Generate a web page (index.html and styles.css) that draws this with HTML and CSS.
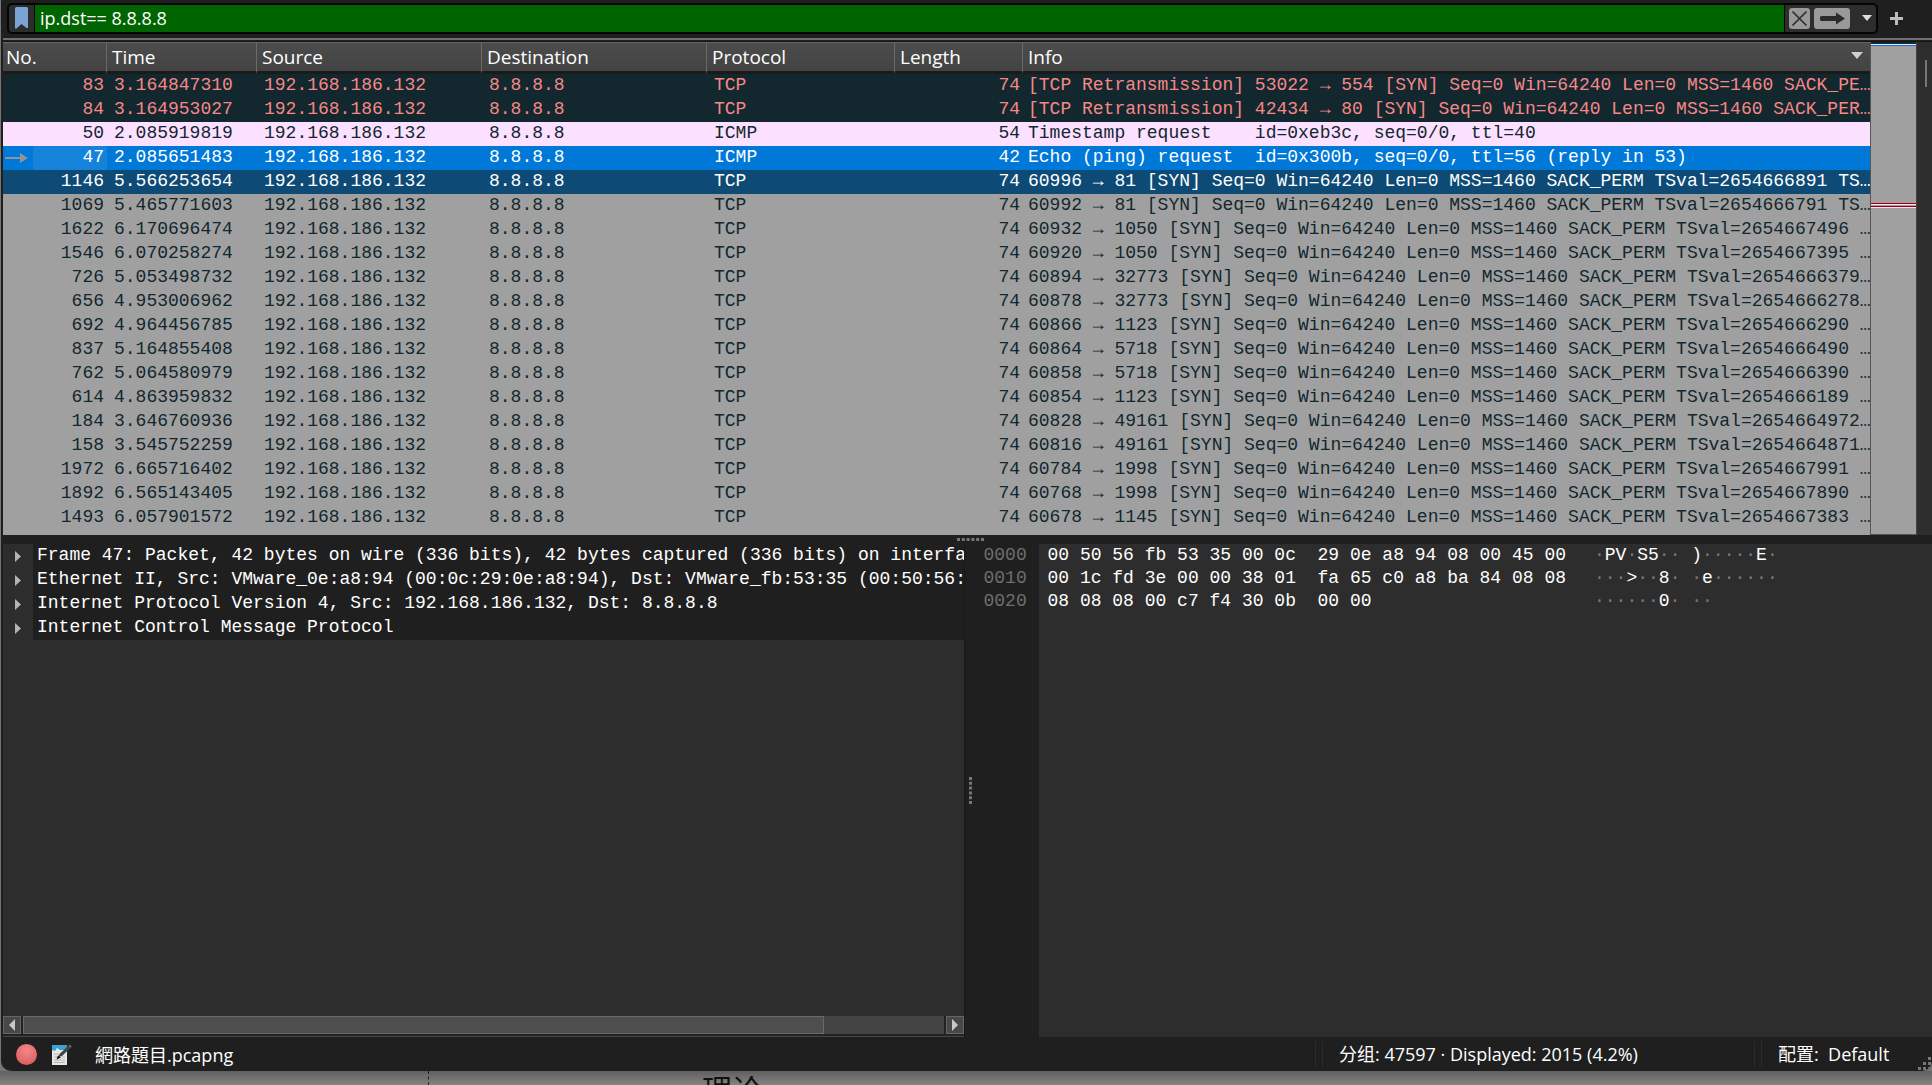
FILE: index.html
```
<!DOCTYPE html>
<html lang="zh">
<head>
    <meta charset="UTF-8">
    <meta name="viewport" content="width=device-width, initial-scale=1.0">
    <title>網路題目.pcapng</title>
    <link rel="stylesheet" href="styles.css">
</head>
<body>

<div class="window">

    <!-- Display filter -->
    <form class="filter-bar">
        <div class="filter-box">
            <button class="bookmark-button" type="button" aria-label="Bookmarks">
                <svg width="13" height="22" viewBox="0 0 13 22"><path d="M0 1.500Q0 0 1.500 0h10Q13 0 13 1.500V21h-1.500L6.500 17l-5 4.500H0z" fill="#7aa3d6"/></svg>
            </button>
            <input class="filter-input" type="text" name="filter" value="ip.dst== 8.8.8.8" aria-label="Display filter" spellcheck="false">
            <button class="tool-button clear-button" type="button" aria-label="Clear">
                <svg width="21" height="21" viewBox="0 0 21 21"><path d="M3.500 3.500l14 14M17.500 3.500l-14 14" stroke="#2b2b2b" stroke-width="1.600"/></svg>
            </button>
            <button class="tool-button apply-button" type="submit" aria-label="Apply">
                <svg width="36" height="21" viewBox="0 0 36 21"><path d="M7.500 8h14.500V4.500L31 10.500 22 16.500V13H7.500Q6 13 6 11.500v-2Q6 8 7.500 8z" fill="#2b2b2b"/></svg>
            </button>
            <button class="drop-button" type="button" aria-label="Recent filters">
                <svg width="10" height="6" viewBox="0 0 10 6"><path d="M0 0h10L5 6z" fill="#deded6"/></svg>
            </button>
        </div>
        <button class="add-button" type="button" aria-label="Add filter">
            <svg width="13" height="13" viewBox="0 0 13 13"><path d="M5 0h3v5h5v3H8v5H5V8H0V5h5z" fill="#bdbdbd"/></svg>
        </button>
    </form>

    <!-- Packet list -->
    <div class="packet-pane">
        <div class="packet-list">
            <table class="packets">
                <colgroup>
                    <col class="col-no">
                    <col class="col-time">
                    <col class="col-addr">
                    <col class="col-addr">
                    <col class="col-protocol">
                    <col class="col-length">
                    <col>
                </colgroup>
                <thead>
                    <tr>
                        <th>No.</th><th>Time</th><th>Source</th><th>Destination</th><th>Protocol</th><th>Length</th>
                        <th><div class="sorted">Info <svg width="12" height="7" viewBox="0 0 12 7"><path d="M0 0h12L6 7z" fill="#d0d0d0"/></svg></div></th>
                    </tr>
                </thead>
                <tbody>
                    <tr class="bad"><td>83</td><td>3.164847310</td><td>192.168.186.132</td><td>8.8.8.8</td><td>TCP</td><td>74</td><td>[TCP Retransmission] 53022 → 554 [SYN] Seq=0 Win=64240 Len=0 MSS=1460 SACK_PE…</td></tr>
                    <tr class="bad"><td>84</td><td>3.164953027</td><td>192.168.186.132</td><td>8.8.8.8</td><td>TCP</td><td>74</td><td>[TCP Retransmission] 42434 → 80 [SYN] Seq=0 Win=64240 Len=0 MSS=1460 SACK_PER…</td></tr>
                    <tr class="icmp"><td>50</td><td>2.085919819</td><td>192.168.186.132</td><td>8.8.8.8</td><td>ICMP</td><td>54</td><td>Timestamp request    id=0xeb3c, seq=0/0, ttl=40</td></tr>
                    <tr class="selected"><td><div class="current"><svg width="24" height="10" viewBox="0 0 24 10"><path d="M0 4h15V0l8 5-8 5V6H0z" fill="#8f9499"/></svg><span>47</span></div></td><td>2.085651483</td><td>192.168.186.132</td><td>8.8.8.8</td><td>ICMP</td><td>42</td><td>Echo (ping) request  id=0x300b, seq=0/0, ttl=56 (reply in 53)</td></tr>
                    <tr class="hovered"><td>1146</td><td>5.566253654</td><td>192.168.186.132</td><td>8.8.8.8</td><td>TCP</td><td>74</td><td>60996 → 81 [SYN] Seq=0 Win=64240 Len=0 MSS=1460 SACK_PERM TSval=2654666891 TS…</td></tr>
                    <tr><td>1069</td><td>5.465771603</td><td>192.168.186.132</td><td>8.8.8.8</td><td>TCP</td><td>74</td><td>60992 → 81 [SYN] Seq=0 Win=64240 Len=0 MSS=1460 SACK_PERM TSval=2654666791 TS…</td></tr>
                    <tr><td>1622</td><td>6.170696474</td><td>192.168.186.132</td><td>8.8.8.8</td><td>TCP</td><td>74</td><td>60932 → 1050 [SYN] Seq=0 Win=64240 Len=0 MSS=1460 SACK_PERM TSval=2654667496 …</td></tr>
                    <tr><td>1546</td><td>6.070258274</td><td>192.168.186.132</td><td>8.8.8.8</td><td>TCP</td><td>74</td><td>60920 → 1050 [SYN] Seq=0 Win=64240 Len=0 MSS=1460 SACK_PERM TSval=2654667395 …</td></tr>
                    <tr><td>726</td><td>5.053498732</td><td>192.168.186.132</td><td>8.8.8.8</td><td>TCP</td><td>74</td><td>60894 → 32773 [SYN] Seq=0 Win=64240 Len=0 MSS=1460 SACK_PERM TSval=2654666379…</td></tr>
                    <tr><td>656</td><td>4.953006962</td><td>192.168.186.132</td><td>8.8.8.8</td><td>TCP</td><td>74</td><td>60878 → 32773 [SYN] Seq=0 Win=64240 Len=0 MSS=1460 SACK_PERM TSval=2654666278…</td></tr>
                    <tr><td>692</td><td>4.964456785</td><td>192.168.186.132</td><td>8.8.8.8</td><td>TCP</td><td>74</td><td>60866 → 1123 [SYN] Seq=0 Win=64240 Len=0 MSS=1460 SACK_PERM TSval=2654666290 …</td></tr>
                    <tr><td>837</td><td>5.164855408</td><td>192.168.186.132</td><td>8.8.8.8</td><td>TCP</td><td>74</td><td>60864 → 5718 [SYN] Seq=0 Win=64240 Len=0 MSS=1460 SACK_PERM TSval=2654666490 …</td></tr>
                    <tr><td>762</td><td>5.064580979</td><td>192.168.186.132</td><td>8.8.8.8</td><td>TCP</td><td>74</td><td>60858 → 5718 [SYN] Seq=0 Win=64240 Len=0 MSS=1460 SACK_PERM TSval=2654666390 …</td></tr>
                    <tr><td>614</td><td>4.863959832</td><td>192.168.186.132</td><td>8.8.8.8</td><td>TCP</td><td>74</td><td>60854 → 1123 [SYN] Seq=0 Win=64240 Len=0 MSS=1460 SACK_PERM TSval=2654666189 …</td></tr>
                    <tr><td>184</td><td>3.646760936</td><td>192.168.186.132</td><td>8.8.8.8</td><td>TCP</td><td>74</td><td>60828 → 49161 [SYN] Seq=0 Win=64240 Len=0 MSS=1460 SACK_PERM TSval=2654664972…</td></tr>
                    <tr><td>158</td><td>3.545752259</td><td>192.168.186.132</td><td>8.8.8.8</td><td>TCP</td><td>74</td><td>60816 → 49161 [SYN] Seq=0 Win=64240 Len=0 MSS=1460 SACK_PERM TSval=2654664871…</td></tr>
                    <tr><td>1972</td><td>6.665716402</td><td>192.168.186.132</td><td>8.8.8.8</td><td>TCP</td><td>74</td><td>60784 → 1998 [SYN] Seq=0 Win=64240 Len=0 MSS=1460 SACK_PERM TSval=2654667991 …</td></tr>
                    <tr><td>1892</td><td>6.565143405</td><td>192.168.186.132</td><td>8.8.8.8</td><td>TCP</td><td>74</td><td>60768 → 1998 [SYN] Seq=0 Win=64240 Len=0 MSS=1460 SACK_PERM TSval=2654667890 …</td></tr>
                    <tr><td>1493</td><td>6.057901572</td><td>192.168.186.132</td><td>8.8.8.8</td><td>TCP</td><td>74</td><td>60678 → 1145 [SYN] Seq=0 Win=64240 Len=0 MSS=1460 SACK_PERM TSval=2654667383 …</td></tr>
                </tbody>
            </table>
        </div>
        <div class="minimap"></div>
        <div class="list-scroll"><div class="list-thumb"></div></div>
    </div>

    <div class="splitter splitter-row"><svg width="27" height="3" viewBox="0 0 27 3"><path d="M0 1.500h27" stroke="#777" stroke-width="3" stroke-dasharray="3 1.800"/></svg></div>

    <div class="lower">

        <!-- Packet details -->
        <div class="details">
            <ul class="tree">
                <li><button type="button" aria-label="Expand"><svg width="6" height="11" viewBox="0 0 6 11"><path d="M0 0l6 5.500L0 11z" fill="#b4b4b4"/></svg></button><span>Frame 47: Packet, 42 bytes on wire (336 bits), 42 bytes captured (336 bits) on interfac</span></li>
                <li><button type="button" aria-label="Expand"><svg width="6" height="11" viewBox="0 0 6 11"><path d="M0 0l6 5.500L0 11z" fill="#b4b4b4"/></svg></button><span>Ethernet II, Src: VMware_0e:a8:94 (00:0c:29:0e:a8:94), Dst: VMware_fb:53:35 (00:50:56:f</span></li>
                <li><button type="button" aria-label="Expand"><svg width="6" height="11" viewBox="0 0 6 11"><path d="M0 0l6 5.500L0 11z" fill="#b4b4b4"/></svg></button><span>Internet Protocol Version 4, Src: 192.168.186.132, Dst: 8.8.8.8</span></li>
                <li><button type="button" aria-label="Expand"><svg width="6" height="11" viewBox="0 0 6 11"><path d="M0 0l6 5.500L0 11z" fill="#b4b4b4"/></svg></button><span>Internet Control Message Protocol</span></li>
            </ul>
            <div class="h-scroll">
                <button type="button" aria-label="Scroll left"><svg width="6" height="12" viewBox="0 0 6 12"><path d="M6 0v12L0 6z" fill="#c8c8c8"/></svg></button>
                <div class="h-track"><div class="h-thumb"></div></div>
                <button type="button" aria-label="Scroll right"><svg width="6" height="12" viewBox="0 0 6 12"><path d="M0 0v12l6-6z" fill="#c8c8c8"/></svg></button>
            </div>
        </div>

        <div class="splitter splitter-col"><svg width="3" height="27" viewBox="0 0 3 27"><path d="M1.500 0v27" stroke="#777" stroke-width="3" stroke-dasharray="3 1.800"/></svg></div>

        <!-- Packet bytes -->
        <div class="bytes">
            <pre class="offsets">0000
0010
0020</pre>
            <div class="dump">
                <pre class="hex">00 50 56 fb 53 35 00 0c  29 0e a8 94 08 00 45 00
00 1c fd 3e 00 00 38 01  fa 65 c0 a8 ba 84 08 08
08 08 08 00 c7 f4 30 0b  00 00</pre>
                <pre class="ascii"><i>·</i>PV<i>·</i>S5<i>··</i> )<i>·····</i>E<i>·</i>
<i>···</i>&gt;<i>··</i>8<i>·</i> <i>·</i>e<i>······</i>
<i>······</i>0<i>·</i> <i>··</i></pre>
            </div>
        </div>
    </div>

    <!-- Status bar -->
    <div class="status-bar">
        <button class="expert-button" type="button" aria-label="Expert information"></button>
        <button class="comment-button" type="button" aria-label="Capture comments">
            <svg width="21" height="21" viewBox="0 0 21 21">
                <path d="M1 1h15v20H1z" fill="#e9e9e4"/>
                <path d="M1 1h15v5H9L6 4 4 7 1 6z" fill="#3aa0d8"/>
                <path d="M3 10h5M3 13h4M11 13h3M3 16h11M3 18.500h11" stroke="#b5b5b0"/>
                <path d="M7 13l2-3.500 8-7.500 2.500 2-8.500 8z" fill="#3f4545"/>
                <path d="M17 2l1.500-1.500 2.500 2L19.500 4z" fill="#5c6262"/>
                <path d="M5.500 15.500L7 11.500l3 2z" fill="#111"/>
            </svg>
        </button>
        <span class="status-file">網路題目.pcapng</span>
        <span class="status-cell status-packets">分组: 47597 · Displayed: 2015 (4.2%)</span>
        <span class="status-cell status-profile">配置: &nbsp;Default</span>
        <svg class="grip" width="13" height="13" viewBox="0 0 13 13"><path d="M10 0h3v3h-3zM5 5h3v3H5zM10 5h3v3h-3zM0 10h3v3H0zM5 10h3v3H5zM10 10h3v3h-3z" fill="#777"/></svg>
    </div>
</div>

<!-- Document behind the window -->
<div class="backdrop"><span class="ruler"></span><span class="backdrop-text">理论</span></div>

</body>
</html>
```
FILE: styles.css
```
* {
    box-sizing: border-box;
}
body {
    margin: 0;
    height: 100vh;
    display: flex;
    flex-direction: column;
    overflow: hidden;
    background: #777572;
    color: #fff;
    font-family: "Open Sans", "Noto Sans CJK SC", sans-serif;
    font-size: 18px;
}
button {
    display: flex;
    align-items: center;
    justify-content: center;
    padding: 0;
    border: 0;
    background: none;
}
svg {
    display: block;
    flex: none;
}
pre {
    margin: 0;
}
.packets tbody, .tree, pre {
    font-family: "Liberation Mono", monospace;
    font-size: 18px;
}
.window {
    flex: 1;
    min-height: 0;
    display: flex;
    flex-direction: column;
    margin-left: 1px;
    padding-left: 2px;
    background: #1f1f1f;
    border-radius: 0 0 10px 10px;
    overflow: hidden;
}

/* Filter bar */
.filter-bar {
    display: flex;
    align-items: center;
    height: 42px;
    padding: 0 29px 5px 4px;
    border-bottom: 1px solid #141414;
    background: linear-gradient(#6f6f6f, #6f6f6f) 0 38px / 100% 2px no-repeat;
    gap: 12px;
}
.filter-box {
    flex: 1;
    display: flex;
    align-items: center;
    height: 31px;
    border: 2px solid #050505;
    border-radius: 5px;
    background: #2d2d2d;
}
.bookmark-button {
    width: 25px;
}
.filter-input {
    flex: 1;
    min-width: 0;
    height: 27px;
    padding: 0 5px;
    border: solid #050505;
    border-width: 0 1px;
    outline: none;
    background: #006400;
    color: #fff;
    font: inherit;
}
.tool-button {
    height: 21px;
    margin-left: 4px;
    border-radius: 3px;
    background: #999;
}
.drop-button {
    width: 26px;
    padding-left: 8px;
}

/* Packet list */
.packet-pane {
    flex: 1 1 0;
    min-height: 0;
    display: flex;
}
.packet-list {
    flex: 1;
    min-width: 0;
    overflow: hidden;
    background: #a0a0a0;
    border-right: 1px solid #555;
}
.packets {
    width: 100%;
    table-layout: fixed;
    border-collapse: separate;
    border-spacing: 0;
}
.col-no {
    width: 104px;
}
.col-time {
    width: 150px;
}
.col-addr {
    width: 225px;
}
.col-protocol {
    width: 188px;
}
.col-length {
    width: 128px;
}
.packets th {
    height: 32px;
    padding: 0 7px 0 5px;
    border-top: 1px solid #666;
    border-right: 1px solid #6a6a6a;
    border-bottom: 3px solid #1a1a1a;
    background: linear-gradient(#4c4c4c, #434343);
    font-size: 19px;
    font-weight: 400;
    line-height: 28px;
    text-align: left;
}
.packets th:first-child {
    padding-left: 3px;
}
.packets th:last-child {
    border-right: 0;
}
.sorted {
    display: flex;
    justify-content: space-between;
}
.sorted svg {
    margin-top: 9px;
}
.packets td {
    height: 24px;
    padding: 0 3px 2px 7px;
    line-height: 22px;
    white-space: pre;
    overflow: hidden;
    color: #12272e;
}
.packets td:first-child, .packets td:nth-child(6) {
    text-align: right;
}
.packets td:last-child {
    padding-left: 5px;
    padding-right: 0;
}
.packets .bad td {
    background: #12272e;
    color: #f78787;
}
.packets .icmp td {
    background: #fce0ff;
}
.packets .selected td {
    background: #0078d7;
    color: #fff;
}
.packets .hovered td {
    background: #0e4a76;
    color: #fff;
}
.packets .selected td:first-child {
    padding: 0 0 0 2px;
}
.current {
    display: flex;
    align-items: center;
    gap: 4px;
}
.current span {
    flex: 1;
    padding: 0 3px 2px 0;
    border-radius: 3px;
    background: #1683da;
}
.minimap {
    width: 45px;
    border-bottom: 1px solid #555;
    background: linear-gradient(#12272e 2px, #fce0ff 2px 3px, #0078d7 3px 4px, #a0a0a0 4px 161px, #a40000 161px 162px, #fce0ff 162px 163px, #a0a0a0 163px 164px, #a40000 164px 165px, #fce0ff 165px 166px, #a0a0a0 166px);
}
.list-scroll {
    width: 16px;
    padding: 18px 5px 0 8px;
    border-left: 1px solid #444;
    background: #2d2d2d;
}
.list-thumb {
    width: 2px;
    height: 27px;
    background: #777;
}
.splitter {
    display: flex;
    align-items: center;
    justify-content: center;
}
.splitter-row {
    height: 9px;
    padding-left: 6px;
}
.splitter-col {
    width: 12px;
}

/* Details and bytes */
.lower {
    flex: 1 1 0;
    min-height: 0;
    display: flex;
}
.details {
    flex: 1 1 6px;
    min-width: 0;
    display: flex;
    flex-direction: column;
    background: #2d2d2d;
    border-right: 1px solid #181818;
}
.tree {
    flex: 1;
    margin: 0;
    padding: 0;
    list-style: none;
}
.tree li {
    display: flex;
    height: 24px;
    line-height: 22px;
}
.tree button {
    flex: none;
    width: 30px;
}
.tree span {
    flex: 1;
    min-width: 0;
    padding-left: 4px;
    overflow: hidden;
    white-space: nowrap;
    background: #1f1f1f;
}
.h-scroll {
    display: flex;
    gap: 2px;
    height: 21px;
    padding-bottom: 2px;
    border-bottom: 1px solid #484848;
    background: #222;
}
.h-scroll button {
    width: 18px;
    border: 1px solid #666;
    background: #484848;
}
.h-track {
    flex: 1;
    background: #444;
}
.h-thumb {
    width: 87%;
    height: 100%;
    border: 1px solid #696969;
    background: #4e4e4e;
}
.bytes {
    flex: 1 1 0;
    min-width: 0;
    display: flex;
}
.bytes pre {
    line-height: 23px;
}
.offsets {
    width: 62px;
    padding-left: 7px;
    color: #6e6e6e;
}
.dump {
    flex: 1;
    display: flex;
    gap: 28px;
    padding-left: 9px;
    background: #2d2d2d;
}
.ascii i {
    color: #777;
    font-style: normal;
}

/* Status bar */
.status-bar {
    display: flex;
    align-items: center;
    height: 34px;
    padding-left: 13px;
}
.expert-button {
    width: 21px;
    height: 21px;
    border-radius: 50%;
    background: radial-gradient(circle at 50% 30%, #f08a8a, #dc5252);
}
.comment-button {
    margin: 0 23px 0 14px;
}
.status-file {
    flex: 1;
    font-family: "Open Sans", "Noto Sans CJK TC", sans-serif;
}
.status-cell {
    height: 26px;
    padding-left: 16px;
    border-left: 1px solid #2c2c2c;
    box-shadow: -6px 0 #1f1f1f, -7px 0 #2c2c2c;
    line-height: 26px;
}
.status-packets {
    width: 439px;
}
.status-profile {
    width: 157px;
}
.grip {
    align-self: flex-end;
    margin: 0 1px 1px 0;
}
.backdrop {
    display: flex;
    height: 14px;
    padding-left: 428px;
    overflow: hidden;
    background: linear-gradient(#62605e, #858380);
}
.ruler {
    width: 274px;
    border-left: 1px dashed #222;
}
.backdrop-text {
    color: #111;
    font-family: "Noto Sans CJK SC", sans-serif;
    font-size: 30px;
    line-height: 34px;
}
```
